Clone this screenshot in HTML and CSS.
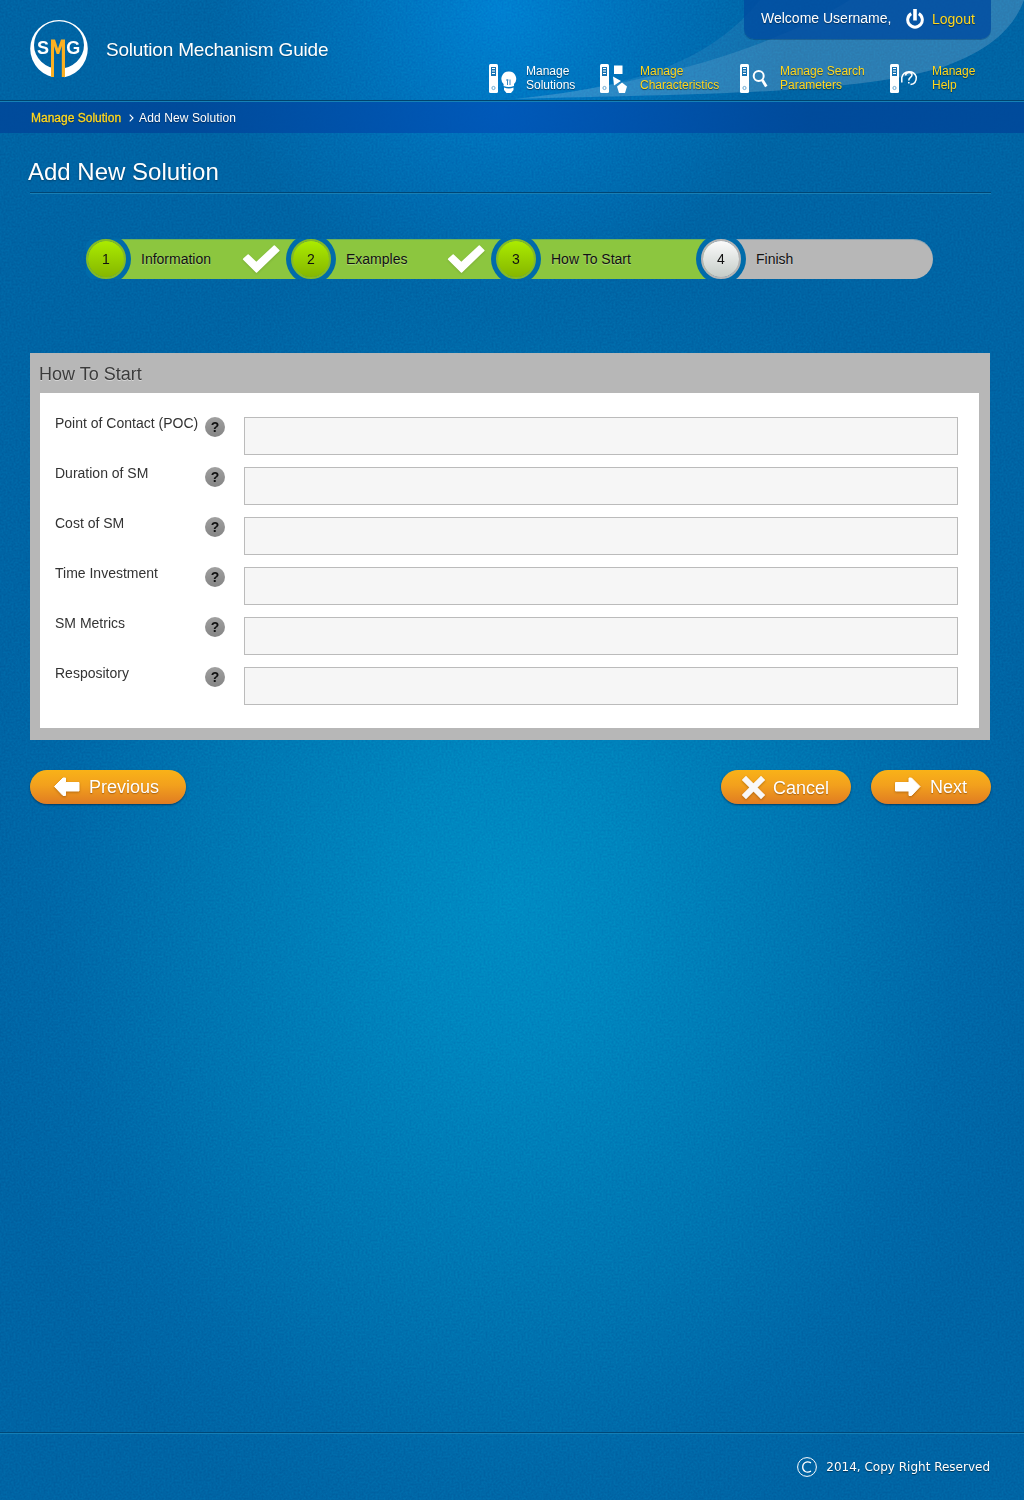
FILE: index.html
```html
<!DOCTYPE html>
<html lang="en">
<head>
<meta charset="utf-8">
<title>Solution Mechanism Guide</title>
<link rel="stylesheet" href="styles.css">
</head>
<body>
<svg class="grain" width="1024" height="1500" aria-hidden="true">
  <filter id="noise" x="0" y="0" width="100%" height="100%" color-interpolation-filters="sRGB"><feTurbulence type="fractalNoise" baseFrequency="0.5" numOctaves="2" seed="4"/><feColorMatrix values="2 0 0 0 -.5  2 0 0 0 -.5  2 0 0 0 -.5  0 0 0 0 1"/></filter>
  <rect width="1024" height="1500" filter="url(#noise)"/>
</svg>
<svg width="0" height="0" class="defs" aria-hidden="true">
  <symbol id="remote" viewBox="0 0 9 29">
    <rect width="9" height="29" rx="1.5" fill="#fff"/>
    <path d="M2 3h5v9H2z" fill="#1672b2"/>
    <path d="M3 4.500h3M3 7h3M3 9.500h3" stroke="#fff"/>
    <circle cx="4.5" cy="24" r="1.6" fill="none" stroke="#4a97c9" stroke-width=".8"/>
  </symbol>
  <symbol id="check" viewBox="0 0 38 29">
    <path d="M1.700 15.200 6.200 11 14.300 18.800 32.300 2 36.800 6.500 14.500 28z" fill="#fff" stroke="#fff" stroke-width="1.600" stroke-linejoin="round"/>
  </symbol>
</svg>

<header class="header">
  <svg class="swoosh" width="510" height="100" viewBox="514 0 510 100" aria-hidden="true">
    <path d="M514 99C625 88 707 66 760 0H1024C1012 32 985 52 940 68C850 94 700 94 514 99Z" fill="#fff" fill-opacity=".07"/>
    <path d="M514 99C630 87 760 55 850 0H1024C1012 32 985 52 940 68C850 94 700 94 514 99Z" fill="#fff" fill-opacity=".11"/>
  </svg>
  <a class="brand">
    <svg width="58" height="58" viewBox="0 0 58 58" aria-hidden="true">
      <path fill="#fff" fill-rule="evenodd" d="M29 0A28.800 28.800 0 1 1 29 57.600A28.800 28.800 0 1 1 29 0ZM29 1.300A25 23.700 0 1 0 29 48.700A25 23.700 0 1 0 29 1.300Z"/>
      <path fill="#0067a9" d="M21 40h13.500v18H21z"/>
      <text x="7" y="33.500" class="logo-text">S</text>
      <text x="36.300" y="33.500" class="logo-text">G</text>
      <path fill="#fbb022" d="M21 19.500h4L28 28.500l3-9h4V57h-3.200V26l-2.600 8h-2.500L24 26v31h-3z"/>
    </svg>
    <span class="brand-name">Solution Mechanism Guide</span>
  </a>
  <div class="header-right">
    <div class="user-box">
      <span class="welcome">Welcome Username,</span>
      <svg width="18" height="20" viewBox="0 0 18 20" aria-hidden="true"><path d="M5.200 4.600A7.300 7.300 0 1 0 12.800 4.600" fill="none" stroke="#fff" stroke-width="3"/><path d="M9 0v11.500" stroke="#fff" stroke-width="3.600"/></svg>
      <a class="logout">Logout</a>
    </div>
    <nav class="nav">
      <a class="nav-item nav-solutions">
        <svg width="28" height="30" viewBox="0 0 28 30" aria-hidden="true"><use href="#remote" width="9" height="29"/><path d="M19.800 7.500a7.300 7.300 0 0 1 5.200 12.500v2q-5.200 2-10.400 0v-2A7.300 7.300 0 0 1 19.800 7.500z" fill="#fff"/><path d="M15 23.500q5 1.800 9.500 0v2.500l-2.500 3h-4.500l-2.500-3z" fill="#fff"/><path d="M18.500 21v-5.500M21 21v-5.500M17 16h2.500" fill="none" stroke="#3989c2" stroke-width="1"/></svg>
        <span>Manage<br>Solutions</span>
      </a>
      <a class="nav-item nav-char">
        <svg width="28" height="30" viewBox="0 0 28 30" aria-hidden="true"><use href="#remote" width="9" height="29"/><path d="M14 1.500h8.500V10H14zM13 12.500l8 4.500-7 4.500zM22 18.500l5 4-2 6.500h-6l-2-6.500z" fill="#fff"/></svg>
        <span>Manage<br>Characteristics</span>
      </a>
      <a class="nav-item nav-search">
        <svg width="28" height="30" viewBox="0 0 28 30" aria-hidden="true"><use href="#remote" width="9" height="29"/><circle cx="18.700" cy="12" r="5" fill="none" stroke="#fff" stroke-width="2"/><path d="M22.300 16l4 6.500" stroke="#fff" stroke-width="2.800"/></svg>
        <span>Manage Search<br>Parameters</span>
      </a>
      <a class="nav-item nav-help">
        <svg width="28" height="30" viewBox="0 0 28 30" aria-hidden="true"><use href="#remote" width="9" height="29"/><path d="M11.800 18.500V13.500A7.500 7.500 0 0 1 26.300 13Q26.500 20 20.500 20.500M15.500 11.500C16 7.500 22 7.500 22 11C22 13.500 18.500 13.500 18.800 16.500M18.800 18v1.500" fill="none" stroke="#fff" stroke-width="1.500"/></svg>
        <span>Manage<br>Help</span>
      </a>
    </nav>
  </div>
</header>

<div class="breadcrumb">
  <a>Manage Solution</a>
  <svg width="5" height="8" viewBox="0 0 5 8" aria-hidden="true"><path d="M.7.700 4 4 .700 7.300" fill="none" stroke="#fff" stroke-width="1.100"/></svg>
  <span>Add New Solution</span>
</div>

<main class="main">
  <h1>Add New Solution</h1>

  <ol class="steps">
    <li class="step"><b class="num">1</b><span class="label">Information</span><svg class="tick" width="38" height="29"><use href="#check"/></svg></li>
    <li class="step"><b class="num">2</b><span class="label">Examples</span><svg class="tick" width="38" height="29"><use href="#check"/></svg></li>
    <li class="step"><b class="num">3</b><span class="label">How To Start</span></li>
    <li class="step last"><b class="num">4</b><span class="label">Finish</span></li>
  </ol>

  <section class="panel">
    <h2>How To Start</h2>
    <form class="fields">
      <div class="field"><label for="poc">Point of Contact (POC)</label><i class="help">?</i><input id="poc" type="text"></div>
      <div class="field"><label for="duration">Duration of SM</label><i class="help">?</i><input id="duration" type="text"></div>
      <div class="field"><label for="cost">Cost of SM</label><i class="help">?</i><input id="cost" type="text"></div>
      <div class="field"><label for="time">Time Investment</label><i class="help">?</i><input id="time" type="text"></div>
      <div class="field"><label for="metrics">SM Metrics</label><i class="help">?</i><input id="metrics" type="text"></div>
      <div class="field"><label for="repo">Respository</label><i class="help">?</i><input id="repo" type="text"></div>
    </form>
  </section>

  <div class="actions">
    <a class="btn previous"><svg width="26" height="20" viewBox="0 0 26 20" aria-hidden="true"><path d="M.5 9.500 9 1h2.500v4.500H25v8.500H11.500v4.500H9z" fill="#fff" stroke="#fff" stroke-linejoin="round"/></svg><span>Previous</span></a>
    <a class="btn cancel"><svg width="23" height="23" viewBox="0 0 23 23" aria-hidden="true"><path d="M4 4l15 15M19 4 4 19" stroke="#f8f8f8" stroke-width="6" stroke-linecap="square"/></svg><span>Cancel</span></a>
    <a class="btn next"><svg width="26" height="20" viewBox="0 0 26 20" aria-hidden="true"><path d="M25 9.500 16.500 1H14v4.500H.5v8.500H14v4.500h2.500z" fill="#fff" stroke="#fff" stroke-linejoin="round"/></svg><span>Next</span></a>
  </div>
</main>

<footer class="footer">
  <svg width="20" height="20" viewBox="0 0 20 20" aria-hidden="true"><circle cx="10" cy="10" r="9.400" fill="none" stroke="#fff"/><path d="M14 5.800C9.500 3.500 5.700 5.800 5.700 10S9.500 16.500 14 14.200" fill="none" stroke="#fff" stroke-width="1.300"/></svg>
  <span>2014, Copy Right Reserved</span>
</footer>
</body>
</html>
```
FILE: styles.css
```css
* { box-sizing: border-box; }
body {
  position: relative;
  margin: 0;
  width: 1024px;
  height: 1500px;
  display: flex;
  flex-direction: column;
  overflow: hidden;
  font-family: "Liberation Sans", Arial, sans-serif;
  color: #fff;
  background:
    radial-gradient(circle 290px at 500px 10px, rgba(0,130,212,.95), rgba(0,125,205,.5) 50%, rgba(0,115,190,0)),
    radial-gradient(ellipse 540px 680px at 510px 900px, #008bc3 0%, #0085be 22%, #0075b1 58%, #0068a8 84%, #0064a4 100%);
}
.grain { position: absolute; inset: 0; z-index: -1; opacity: .06; mix-blend-mode: overlay; }
.defs { position: absolute; }
a { color: #ffd71e; text-decoration: none; }

.header {
  position: relative;
  height: 102px;
  flex: none;
  display: flex;
  justify-content: space-between;
  border-bottom: 1px solid #1681b6;
  box-shadow: inset 0 -1px #00436e;
}
.swoosh { position: absolute; right: 0; top: 0; }
.brand { display: flex; padding: 20px 0 0 30px; gap: 18px; color: #fff; }
.logo-text { font: bold 18px "Liberation Sans", Arial, sans-serif; fill: #fff; }
.brand-name { font-size: 19px; line-height: 22px; letter-spacing: -.2px; padding-top: 19px; text-shadow: 0 1px 1px rgba(0,0,0,.3); }
.header-right { position: relative; width: 535px; }
.user-box {
  display: flex;
  margin-left: 255px;
  width: 247px;
  height: 39px;
  padding: 9px 0 0 17px;
  border-radius: 0 0 10px 10px;
  background: rgba(0,75,160,.8);
  box-shadow: 0 1px rgba(0,50,90,.35);
  font-size: 14px;
  line-height: 18px;
  text-shadow: 0 1px 1px rgba(0,0,0,.45);
}
.welcome { width: 145px; }
.logout { margin: 1px 0 0 8px; }
.nav { display: flex; padding-top: 25px; font-size: 12px; line-height: 14px; text-shadow: 0 1px 1px rgba(0,0,0,.5); }
.nav-item { display: flex; }
.nav-solutions { width: 111px; gap: 9px; color: #fff; }
.nav-char { width: 140px; gap: 12px; }
.nav-search { width: 150px; gap: 12px; }
.nav-help { gap: 14px; }
.nav-item svg { flex: none; }
.nav-item span { white-space: nowrap; }

.breadcrumb {
  flex: none;
  height: 31px;
  display: flex;
  padding: 9px 0 0 31px;
  font-size: 12px;
  line-height: 14px;
  background: radial-gradient(circle 310px at 500px 10px, rgba(0,86,184,.9), rgba(0,72,154,.9));
  text-shadow: 0 1px 1px rgba(0,0,0,.4);
}
.breadcrumb a { -webkit-text-stroke: .3px #ffd71e; }
.breadcrumb svg { margin: 3px 5px 0 8px; }
.breadcrumb span { letter-spacing: .1px; }

.main { flex: 1; width: 961px; margin-left: 30px; }
h1 {
  margin: 0;
  height: 60px;
  padding: 25px 0 0;
  text-indent: -2px;
  font-size: 24px;
  line-height: 28px;
  font-weight: 400;
  border-bottom: 1px solid #004675;
  box-shadow: 0 1px #187fb5;
  text-shadow: 0 1px 2px rgba(0,0,0,.35);
}

.steps { list-style: none; display: flex; margin: 46px 0 0 56px; padding: 0; height: 41px; color: #111; }
.step { position: relative; width: 205px; display: flex; font-size: 14px; line-height: 18px; }
.step::before {
  content: "";
  position: absolute;
  left: 34px;
  width: 182px;
  height: 40px;
  background: #8cc63f;
  box-shadow: inset 0 1px rgba(0,107,170,.25);
}
.step.last { width: 232px; }
.step.last::before { width: 198px; border-radius: 0 20px 20px 0; background: #b7b7b7; }
.num {
  position: relative;
  z-index: 1;
  flex: none;
  width: 40px;
  height: 40px;
  border-radius: 50%;
  border: 2px solid #83ba27;
  background: linear-gradient(#abeb00, #85b600) padding-box;
  background-color: #83ba27;
  box-shadow: 0 0 0 5px #006baa;
  clip-path: polygon(-6px 0, 46px 0, 46px 40px, -6px 40px);
  text-align: center;
  line-height: 36px;
  font-weight: 400;
}
.step:first-child .num { clip-path: polygon(0 0, 46px 0, 46px 40px, 0 40px); }
.step.last .num { border-color: #b5b5b5; background: linear-gradient(#fbfbfb, #c5cdc8) padding-box; background-color: #b5b5b5; }
.label { position: relative; width: 101px; margin: 11px 0 0 15px; text-shadow: 0 1px 1px rgba(255,255,255,.35); }
.tick { position: relative; margin-top: 5px; filter: drop-shadow(0 1px 1px rgba(0,0,0,.12)); }

.panel { width: 960px; height: 387px; margin-top: 73px; padding: 0 11px 12px 10px; background: #b7b7b7; }
h2 { margin: 0; height: 40px; padding-top: 10px; text-indent: -1px; font-size: 18px; line-height: 22px; font-weight: 400; color: #3b3b3b; text-shadow: 0 1px #d8d8d8; }
.fields { height: 335px; padding: 24px 21px 0 15px; display: flex; flex-direction: column; gap: 12px; background: #fff; color: #333; }
.field { display: flex; height: 38px; font-size: 14px; line-height: 12px; }
.field label { width: 150px; white-space: nowrap; }
.help { width: 20px; height: 20px; border-radius: 50%; background: linear-gradient(#a0a0a0, #858585); font: bold 14px/20px "Liberation Sans", Arial, sans-serif; text-align: center; color: #111; }
.field input { width: 714px; height: 38px; margin: 0 0 0 19px; border: 1px solid #bbb; background: #f6f6f6; }

.actions { display: flex; margin-top: 30px; }
.btn {
  display: flex;
  height: 34px;
  border-radius: 17px;
  color: #fff;
  font-size: 18px;
  line-height: 20px;
  background: linear-gradient(#f9b218, #f2a01d 45%, #e07c22);
  box-shadow: 0 1px 2px rgba(0,30,60,.65);
  text-shadow: 0 1px 1px rgba(100,50,0,.5);
}
.btn svg { filter: drop-shadow(0 1px 1px rgba(100,50,0,.4)); }
.previous { width: 156px; padding: 7px 0 0 24px; gap: 9px; }
.cancel { width: 130px; margin-left: auto; padding: 6px 0 0 21px; gap: 8px; }
.cancel span { padding-top: 2px; }
.next { width: 120px; margin-left: 20px; padding: 7px 0 0 24px; gap: 9px; }

.footer {
  flex: none;
  height: 68px;
  display: flex;
  justify-content: flex-end;
  padding: 24px 34px 0 0;
  gap: 9px;
  border-top: 1px solid #004878;
  box-shadow: inset 0 1px #147eb6;
  font: 12px/20px "DejaVu Sans", Verdana, sans-serif;
  text-shadow: 0 1px 1px rgba(0,0,0,.5);
}
```
